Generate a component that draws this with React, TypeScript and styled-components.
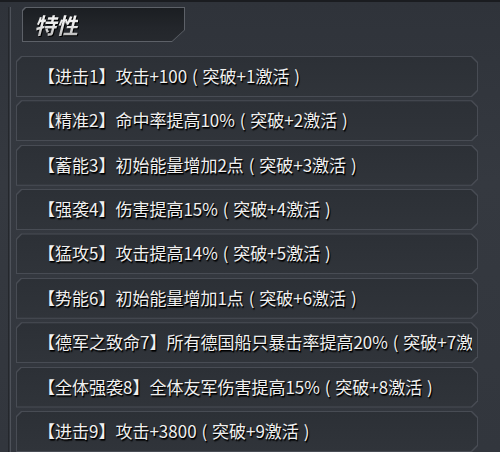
import styled, { createGlobalStyle } from "styled-components"

const GlobalStyle = createGlobalStyle`
  html, body {
    margin: 0;
    padding: 0;
    background: #32363d;
  }
  body {
    font-family: "Noto Sans CJK SC", "Noto Sans", sans-serif;
  }
`

const Panel = styled.section`
  position: relative;
  width: 500px;
  height: 452px;
  overflow: hidden;
  box-sizing: border-box;
  border-top: 2px solid #1a1c20;
  background: linear-gradient(180deg, #2f333a 0%, #353940 40%, #32363d 100%);
  padding: 5px 22px 0 10px;
  display: flex;
`

const Rail = styled.div`
  width: 1px;
  flex: none;
  background: #4e525a;
  box-shadow: -2px 0 0 #24272c;
  margin-right: 5px;
`

const Content = styled.div`
  flex: 1;
  min-width: 0;
  display: flex;
  flex-direction: column;
`

const TabFrame = styled.div`
  width: 163px;
  height: 36px;
  margin-left: 6px;
  background: #5d6168;
  clip-path: polygon(3px 0, 100% 0, 100% 23px, 150px 100%, 0 100%, 0 3px);
  padding: 1px;
  box-sizing: border-box;
`

const TabInner = styled.div`
  height: 100%;
  background: linear-gradient(180deg, #1b1e22 0%, #23262b 60%, #26292e 100%);
  clip-path: polygon(3px 0, 100% 0, 100% 22px, 149px 100%, 0 100%, 0 3px);
  display: flex;
  align-items: center;
  padding-left: 11px;
`

const TabTitle = styled.h2`
  margin: 0;
  font-size: 22px;
  font-weight: 700;
  font-style: italic;
  color: #f0f0f0;
  background: linear-gradient(180deg, #ffffff 0%, #e8e8e8 55%, #a8a8a8 100%);
  -webkit-background-clip: text;
  background-clip: text;
  -webkit-text-fill-color: transparent;
  filter: drop-shadow(1px 1px 0 #000);
`

const List = styled.div`
  margin-top: 14px;
  display: flex;
  flex-direction: column;
  gap: 3.4px;
`

const RowFrame = styled.div`
  height: 41px;
  background: #484c54;
  clip-path: polygon(5px 0, calc(100% - 6px) 0, 100% 6px, 100% calc(100% - 6px), calc(100% - 6px) 100%, 0 100%, 0 5px);
  padding: 1px;
  box-sizing: border-box;
`

const RowInner = styled.div`
  height: 100%;
  box-sizing: border-box;
  background: linear-gradient(180deg, #2c3036 0%, #30343a 100%);
  clip-path: polygon(5px 0, calc(100% - 6px) 0, 100% 6px, 100% calc(100% - 6px), calc(100% - 6px) 100%, 0 100%, 0 5px);
  display: flex;
  align-items: center;
  padding: 0 5px 0 21px;
`

const RowText = styled.span`
  flex: 1;
  min-width: 0;
  overflow: hidden;
  white-space: nowrap;
  padding-bottom: 2px;
  font-size: 17px;
  word-spacing: 1px;
  color: #f0f0f0;
  text-shadow: 1px 1px 0 #000, 1px 2px 1px rgba(0, 0, 0, 0.7);
`

const traits = [
  "【进击1】攻击+100 ( 突破+1激活 )",
  "【精准2】命中率提高10% ( 突破+2激活 )",
  "【蓄能3】初始能量增加2点 ( 突破+3激活 )",
  "【强袭4】伤害提高15% ( 突破+4激活 )",
  "【猛攻5】攻击提高14% ( 突破+5激活 )",
  "【势能6】初始能量增加1点 ( 突破+6激活 )",
  "【德军之致命7】所有德国船只暴击率提高20% ( 突破+7激活 )",
  "【全体强袭8】全体友军伤害提高15% ( 突破+8激活 )",
  "【进击9】攻击+3800 ( 突破+9激活 )",
]

export default function App() {
  return (
    <>
      <GlobalStyle />
      <Panel>
        <Rail />
        <Content>
          <TabFrame>
            <TabInner>
              <TabTitle>特性</TabTitle>
            </TabInner>
          </TabFrame>
          <List>
            {traits.map((t) => (
              <RowFrame key={t}>
                <RowInner>
                  <RowText>{t}</RowText>
                </RowInner>
              </RowFrame>
            ))}
          </List>
        </Content>
      </Panel>
    </>
  )
}
